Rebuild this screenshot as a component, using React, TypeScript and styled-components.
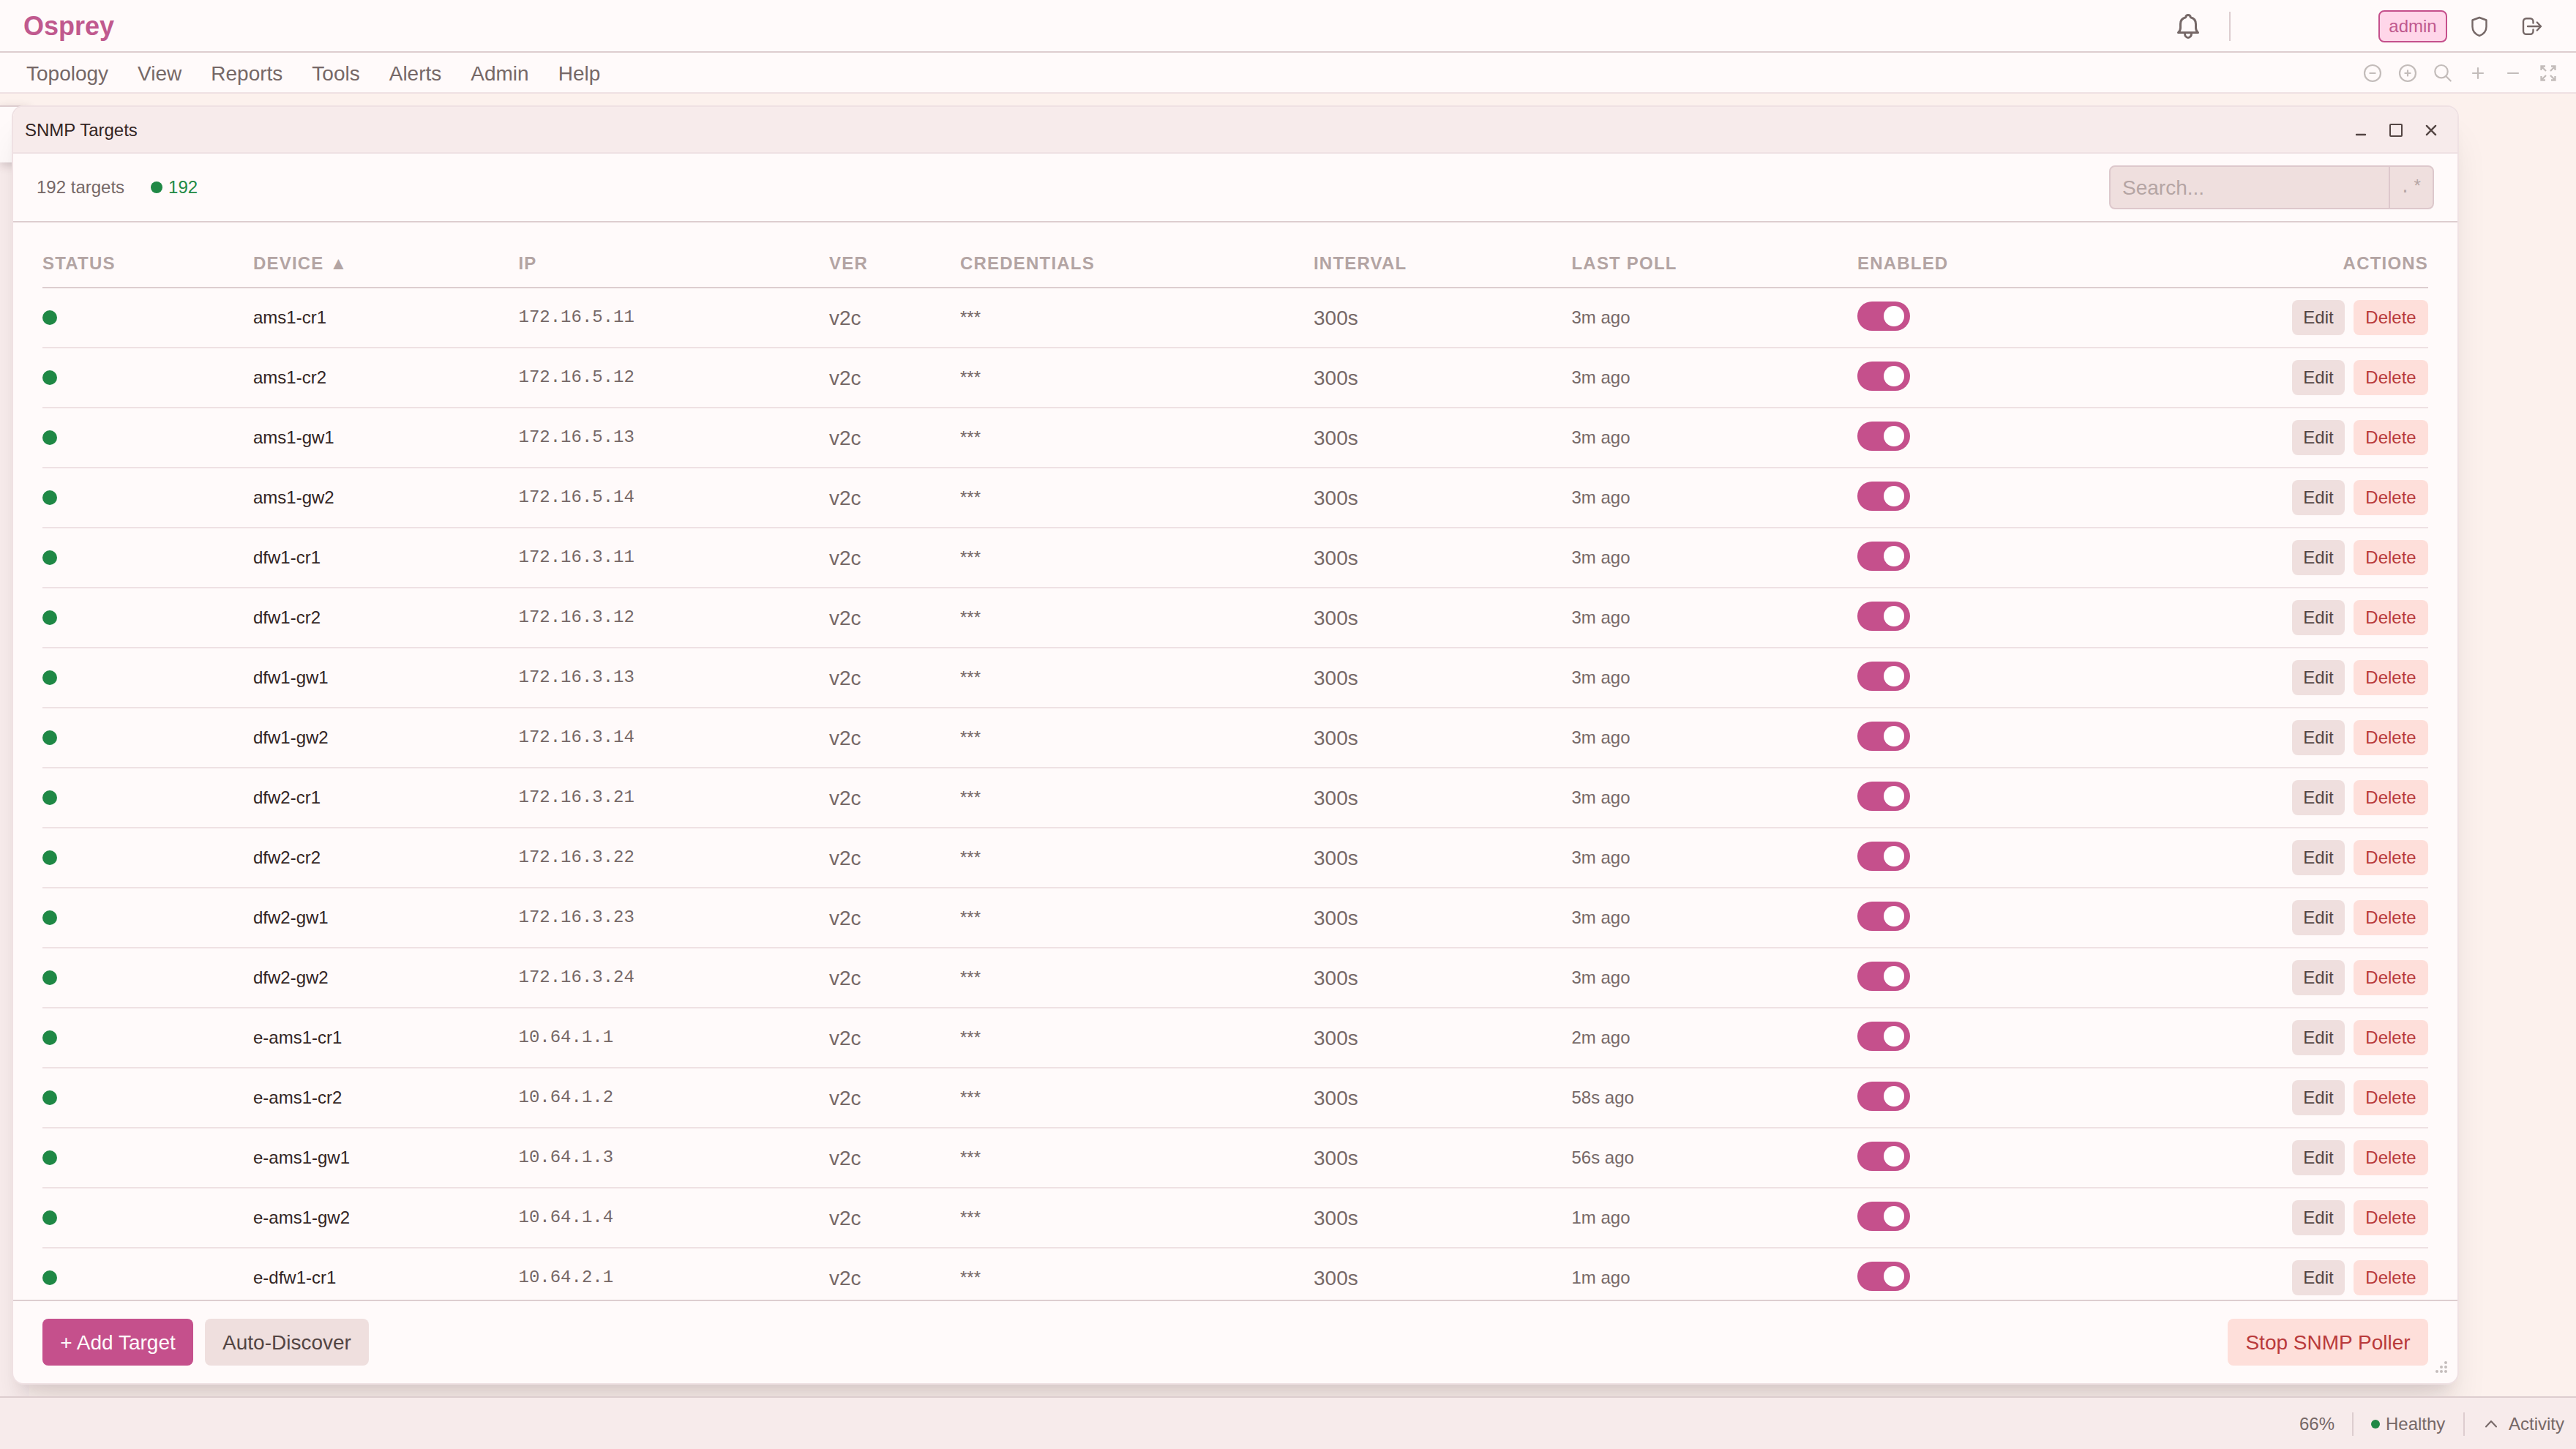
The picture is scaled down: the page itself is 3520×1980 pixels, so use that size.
import React from 'react';
import styled, { createGlobalStyle } from 'styled-components';

const SANS = '"Liberation Sans", Arial, sans-serif';
const MONO = '"Liberation Mono", "Courier New", monospace';

const Global = createGlobalStyle`
  *, *::before, *::after { box-sizing: border-box; }
  html, body { margin: 0; padding: 0; }
  body { font-family: ${SANS}; font-size: 28px; color: #766867; background: #fcf1ed; overflow: hidden; }
  button, input { font-family: inherit; }
`;

const Page = styled.div`
  position: relative;
  width: 3520px;
  height: 1980px;
  display: flex;
  flex-direction: column;
  overflow: hidden;
`;

const Header = styled.header`
  flex: none;
  height: 72px;
  display: flex;
  align-items: center;
  justify-content: space-between;
  padding: 2px 32px 0;
  background: #fffafa;
  border-bottom: 2px solid #ddcdcf;
`;

const Brand = styled.div`
  font-size: 36px;
  font-weight: 700;
  color: #c0598e;
`;

const HeaderTools = styled.div`
  display: flex;
  align-items: center;
  color: #766867;
`;

const Divider = styled.span<{ $h: number; $m: string }>`
  width: 2px;
  height: ${(p) => p.$h}px;
  margin: ${(p) => p.$m};
  background: #ddcdcf;
`;

const Role = styled.span`
  height: 44px;
  width: 94px;
  display: flex;
  align-items: center;
  justify-content: center;
  font-size: 24px;
  color: #c0598e;
  background: #ffd6e9;
  border: 2px solid #c5508c;
  border-radius: 8px;
`;

const IconSlot = styled.span<{ $w: number; $m?: string }>`
  width: ${(p) => p.$w}px;
  margin: ${(p) => p.$m || '0'};
  display: flex;
  align-items: center;
  justify-content: center;
  svg { display: block; }
`;

const MenuBar = styled.nav`
  flex: none;
  height: 56px;
  display: flex;
  align-items: center;
  justify-content: space-between;
  padding: 2px 14px 0 16px;
  background: #fffafa;
  border-bottom: 2px solid #efe1e3;
`;

const Menu = styled.div`
  display: flex;
`;

const MenuItem = styled.span`
  padding: 2px 20px 0;
  font-size: 28px;
  line-height: 32px;
`;

const ViewTools = styled.div`
  display: flex;
  color: #c3bcba;
`;

const Canvas = styled.main`
  position: relative;
  flex: 1;
  min-height: 0;
  padding: 16px 0 0 16px;
  overflow: hidden;
`;

const SideRail = styled.div`
  position: absolute;
  left: 0;
  top: 16px;
  bottom: 0;
  width: 40px;
  background: #f9eded;
`;

const SidePanel = styled.div`
  height: 78px;
  background: #fffafa;
  border-top: 2px solid #ddcdcf;
  box-shadow: 0 4px 12px rgba(60, 30, 40, 0.2);
`;

const Window = styled.section`
  position: relative;
  width: 3344px;
  height: 1748px;
  display: flex;
  flex-direction: column;
  background: #fffafa;
  border: 2px solid #efe1e3;
  border-radius: 16px;
  overflow: hidden;
  box-shadow: 0 40px 50px -10px rgba(30, 0, 20, 0.1), 0 16px 20px -12px rgba(30, 0, 20, 0.1);
`;

const TitleBar = styled.div`
  flex: none;
  height: 64px;
  display: flex;
  align-items: center;
  justify-content: space-between;
  padding: 2px 12px 0 16px;
  background: #f7ebeb;
  border-bottom: 2px solid #efe1e3;
  font-size: 24px;
  color: #332524;
`;

const WindowButtons = styled.div`
  display: flex;
  color: #534543;
`;

const Toolbar = styled.div`
  flex: none;
  height: 94px;
  display: flex;
  align-items: center;
  justify-content: space-between;
  padding: 0 32px;
  border-bottom: 2px solid #ddcdcf;
`;

const Summary = styled.div`
  display: flex;
  align-items: center;
  font-size: 24px;
`;

const Healthy = styled.span`
  display: flex;
  align-items: center;
  gap: 8px;
  margin-left: 36px;
  color: #1f8a45;
`;

const Dot = styled.span<{ $s: number }>`
  flex: none;
  display: block;
  width: ${(p) => p.$s}px;
  height: ${(p) => p.$s}px;
  border-radius: 50%;
  background: #1f8845;
`;

const SearchBox = styled.div`
  display: flex;
  width: 444px;
  height: 60px;
  border: 2px solid #ddc8cc;
  border-radius: 8px;
  background: #efdfde;
  overflow: hidden;
`;

const SearchInput = styled.input`
  flex: 1;
  min-width: 0;
  border: 0;
  outline: 0;
  padding: 2px 16px 0;
  font-size: 28px;
  background: transparent;
  &::placeholder { color: #b5a5a4; opacity: 1; }
`;

const RegexToggle = styled.button`
  width: 60px;
  padding: 0 0 0 2px;
  border: 0;
  border-left: 2px solid #ddc8cc;
  background: transparent;
  font-family: ${MONO};
  font-size: 24px;
  letter-spacing: 2.4px;
  color: #b5a5a4;
`;

const Scroller = styled.div`
  flex: 1;
  min-height: 0;
  padding: 20px 40px 0;
  overflow: hidden;
`;

const Row = styled.div`
  display: grid;
  grid-template-columns: 288px 362.5px 424.5px 179px 483px 352.500px 390.500px 420px 1fr;
  align-items: center;
  height: 82px;
  border-bottom: 2px solid #efe1e3;
`;

const HeadRow = styled(Row)`
  height: 70px;
  padding-top: 4px;
  border-bottom-color: #ddcdcf;
  font-size: 24px;
  font-weight: 700;
  letter-spacing: 1.2px;
  color: #b3a4a3;
`;

const HeadCell = styled.span<{ $right?: boolean }>`
  text-align: ${(p) => (p.$right ? 'right' : 'left')};
  white-space: nowrap;
`;

const Value = styled.span`
  padding-top: 2px;
`;

const Device = styled.span`
  font-size: 24px;
  color: #332524;
`;

const Ip = styled.span`
  font-family: ${MONO};
  font-size: 24px;
  padding-bottom: 1px;
`;

const Small = styled.span`
  font-size: 24px;
`;

const Track = styled.span`
  display: flex;
  justify-content: flex-end;
  align-items: center;
  width: 72px;
  height: 40px;
  margin-bottom: 4px;
  padding: 0 8px;
  border-radius: 20px;
  background: #c5508c;
`;

const Knob = styled.span`
  width: 28px;
  height: 28px;
  border-radius: 50%;
  background: #fff;
`;

const Actions = styled.span`
  display: flex;
  justify-content: flex-end;
  gap: 12px;
`;

type Tone = 'primary' | 'neutral' | 'danger';
const tones: Record<Tone, [string, string]> = {
  primary: ['#c5508c', '#fffafa'],
  neutral: ['#efdfde', '#534543'],
  danger: ['#fedfda', '#b93a3b'],
};

const Button = styled.button<{ $tone: Tone; $w: number; $large?: boolean }>`
  width: ${(p) => p.$w}px;
  height: ${(p) => (p.$large ? 64 : 48)}px;
  padding: ${(p) => (p.$large ? 2 : 0)}px 0 0;
  border: 0;
  border-radius: 8px;
  font-size: ${(p) => (p.$large ? 28 : 24)}px;
  background: ${(p) => tones[p.$tone][0]};
  color: ${(p) => tones[p.$tone][1]};
  white-space: nowrap;
`;

const Footer = styled.div`
  flex: none;
  height: 114px;
  display: flex;
  align-items: center;
  gap: 16px;
  padding: 0 40px;
  border-top: 2px solid #ddcdcf;
`;

const Spacer = styled.span`
  flex: 1;
`;

const Grip = styled.svg`
  position: absolute;
  right: 14px;
  bottom: 14px;
  fill: #c5bcbb;
`;

const StatusBar = styled.footer`
  position: relative;
  flex: none;
  height: 72px;
  display: flex;
  align-items: center;
  justify-content: flex-end;
  padding: 2px 16px 0 0;
  background: #f7ebeb;
  border-top: 2px solid #ddcdcf;
  font-size: 24px;
`;

const Health = styled.span`
  display: flex;
  align-items: center;
  gap: 8px;
  width: 102px;
`;

const strokeProps = {
  fill: 'none',
  stroke: 'currentColor',
  strokeLinecap: 'round' as const,
  strokeLinejoin: 'round' as const,
};

const BellIcon = () => (
  <svg width="32" height="36" viewBox="0 0 32 36" {...strokeProps} strokeWidth="3">
    <path d="M2.500 26.500h27M2.500 26.500C4.700 24.500 5.500 22.500 5.500 20v-5C5.500 10 8.300 6.800 12.600 5.800 12.900 3.600 14 2.500 16 2.500s3.100 1.100 3.400 3.300C23.700 6.800 26.500 10 26.500 15v5c0 2.500.8 4.500 3 6.500M11.500 28a4.500 5.500 0 0 0 9 0" />
  </svg>
);

const ShieldIcon = () => (
  <svg width="28" height="32" viewBox="0 0 28 32" {...strokeProps} strokeWidth="2.400">
    <path d="M14 4 23.500 7.500v9c0 6-4 10.300-9.500 12.300-5.500-2-9.500-6.300-9.500-12.300v-9z" />
  </svg>
);

const LogoutIcon = () => (
  <svg width="28" height="28" viewBox="0 0 28 28" {...strokeProps} strokeWidth="2.400">
    <path d="M15.500 9.500V7.200a4 4 0 0 0-4-4H6a4 4 0 0 0-4 4v13.600a4 4 0 0 0 4 4h5.500a4 4 0 0 0 4-4v-2.300M8 14h18M20.800 8.500 26 14l-5.200 5.500" />
  </svg>
);

const toolPaths = [
  'M14 3a11 11 0 1 0 0 22 11 11 0 0 0 0-22M10.400 14h7.200',
  'M14 3a11 11 0 1 0 0 22 11 11 0 0 0 0-22M10.400 14h7.200M14 10.400v7.200',
  'M12 3a8.700 8.700 0 1 0 0 17.400A8.700 8.700 0 0 0 12 3M18.200 18 24.700 24.500',
  'M14 7v14M7 14h14',
  'M7 14h14',
];

const ExpandIcon = () => (
  <svg width="28" height="28" viewBox="0 0 28 28" fill="none" stroke="currentColor" strokeWidth="2.300">
    <path d="M10 4.500H4.500V10M4.500 4.500l6.500 6.500M18 4.500h5.500V10M23.500 4.500 17 11M4.500 18v5.500H10M4.500 23.500 11 17M18 23.500h5.500V18M23.500 23.500 17 17" />
  </svg>
);

type Target = [device: string, ip: string, poll: string];
const targets: Target[] = [
  ['ams1-cr1', '172.16.5.11', '3m ago'],
  ['ams1-cr2', '172.16.5.12', '3m ago'],
  ['ams1-gw1', '172.16.5.13', '3m ago'],
  ['ams1-gw2', '172.16.5.14', '3m ago'],
  ['dfw1-cr1', '172.16.3.11', '3m ago'],
  ['dfw1-cr2', '172.16.3.12', '3m ago'],
  ['dfw1-gw1', '172.16.3.13', '3m ago'],
  ['dfw1-gw2', '172.16.3.14', '3m ago'],
  ['dfw2-cr1', '172.16.3.21', '3m ago'],
  ['dfw2-cr2', '172.16.3.22', '3m ago'],
  ['dfw2-gw1', '172.16.3.23', '3m ago'],
  ['dfw2-gw2', '172.16.3.24', '3m ago'],
  ['e-ams1-cr1', '10.64.1.1', '2m ago'],
  ['e-ams1-cr2', '10.64.1.2', '58s ago'],
  ['e-ams1-gw1', '10.64.1.3', '56s ago'],
  ['e-ams1-gw2', '10.64.1.4', '1m ago'],
  ['e-dfw1-cr1', '10.64.2.1', '1m ago'],
];

const columns = ['STATUS', 'DEVICE ▲', 'IP', 'VER', 'CREDENTIALS', 'INTERVAL', 'LAST POLL', 'ENABLED', 'ACTIONS'];
const menus = ['Topology', 'View', 'Reports', 'Tools', 'Alerts', 'Admin', 'Help'];

export default function App() {
  return (
    <Page>
      <Global />
      <Header>
        <Brand>Osprey</Brand>
        <HeaderTools>
          <IconSlot $w={32}><BellIcon /></IconSlot>
          <Divider $h={40} $m="0 202px 0 40px" />
          <Role>admin</Role>
          <IconSlot $w={28} $m="0 0 0 30px"><ShieldIcon /></IconSlot>
          <IconSlot $w={28} $m="0 14px 0 44px"><LogoutIcon /></IconSlot>
        </HeaderTools>
      </Header>
      <MenuBar>
        <Menu>{menus.map((m) => <MenuItem key={m}>{m}</MenuItem>)}</Menu>
        <ViewTools>
          {toolPaths.map((d) => (
            <IconSlot key={d} $w={48}>
              <svg width="28" height="28" viewBox="0 0 28 28" {...strokeProps} strokeWidth="2.200"><path d={d} /></svg>
            </IconSlot>
          ))}
          <IconSlot $w={48}><ExpandIcon /></IconSlot>
        </ViewTools>
      </MenuBar>
      <Canvas>
        <SideRail><SidePanel /></SideRail>
        <Window>
          <TitleBar>
            <span>SNMP Targets</span>
            <WindowButtons>
              <IconSlot $w={48}><svg width="20" height="20" {...strokeProps} strokeWidth="2.400"><path d="M4 16h12" /></svg></IconSlot>
              <IconSlot $w={48}><svg width="20" height="20" {...strokeProps} strokeWidth="2"><rect x="2" y="2" width="16" height="16" rx="1" /></svg></IconSlot>
              <IconSlot $w={48}><svg width="20" height="20" {...strokeProps} strokeWidth="2.400"><path d="m3.900 3.900 12.200 12.200M16.100 3.900 3.900 16.100" /></svg></IconSlot>
            </WindowButtons>
          </TitleBar>
          <Toolbar>
            <Summary>
              <span>192 targets</span>
              <Healthy><Dot $s={16} />192</Healthy>
            </Summary>
            <SearchBox>
              <SearchInput placeholder="Search..." />
              <RegexToggle>.*</RegexToggle>
            </SearchBox>
          </Toolbar>
          <Scroller>
            <HeadRow>
              {columns.map((c) => <HeadCell key={c} $right={c === 'ACTIONS'}>{c}</HeadCell>)}
            </HeadRow>
            {targets.map(([device, ip, poll]) => (
              <Row key={device}>
                <Dot $s={20} />
                <Device>{device}</Device>
                <Ip>{ip}</Ip>
                <Value>v2c</Value>
                <Small>***</Small>
                <Value>300s</Value>
                <Small>{poll}</Small>
                <Track><Knob /></Track>
                <Actions>
                  <Button $tone="neutral" $w={72}>Edit</Button>
                  <Button $tone="danger" $w={102}>Delete</Button>
                </Actions>
              </Row>
            ))}
          </Scroller>
          <Footer>
            <Button $tone="primary" $w={206} $large>+ Add Target</Button>
            <Button $tone="neutral" $w={224} $large>Auto-Discover</Button>
            <Spacer />
            <Button $tone="danger" $w={274} $large>Stop SNMP Poller</Button>
          </Footer>
          <Grip width="16" height="16">
            <circle cx="14" cy="2" r="2" /><circle cx="8" cy="8" r="2" /><circle cx="14" cy="8" r="2" />
            <circle cx="2" cy="14" r="2" /><circle cx="8" cy="14" r="2" /><circle cx="14" cy="14" r="2" />
          </Grip>
        </Window>
      </Canvas>
      <StatusBar>
        <span>66%</span>
        <Divider $h={32} $m="0 24px" />
        <Health><Dot $s={12} />Healthy</Health>
        <Divider $h={32} $m="0 27px 0 24px" />
        <IconSlot $w={18} $m="0 15px 0 0">
          <svg width="18" height="12" {...strokeProps} strokeWidth="2"><path d="m2 9.500 7-7.500 7 7.500" /></svg>
        </IconSlot>
        <span>Activity</span>
      </StatusBar>
    </Page>
  );
}
